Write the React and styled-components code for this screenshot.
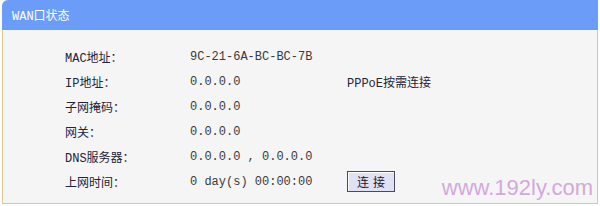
import React from 'react';
import styled, { createGlobalStyle } from 'styled-components';

const GlobalStyle = createGlobalStyle`
  html, body {
    margin: 0;
    padding: 0;
    background: #ffffff;
  }
`;

const Panel = styled.div`
  position: relative;
  width: 596px;
  margin: 0 2px;
  font-family: "Liberation Mono", "Noto Sans CJK SC", monospace;
  font-size: 12px;
`;

const Header = styled.div`
  height: 30px;
  display: flex;
  align-items: center;
  padding-left: 10px;
  background: #6b9cf8;
  border-top-left-radius: 6px;
  color: #ffffff;
  font-size: 12px;
`;

const Body = styled.div`
  height: 174px;
  background: #f5f5f5;
  border: 1px solid #e2c696;
  border-top: none;
  padding: 14px 0 0 62px;
  box-sizing: border-box;
`;

const Grid = styled.div`
  display: grid;
  grid-template-columns: 125px 157px auto;
  grid-auto-rows: 25px;
  align-items: center;
  color: #2b2b3b;
`;

const Cell = styled.div`
  white-space: pre;
  color: ${p => (p.$muted ? '#3a3a3a' : '#23233a')};
`;

const Button = styled.button`
  justify-self: start;
  width: 48px;
  height: 21px;
  padding: 0;
  font-family: "Noto Sans CJK SC", sans-serif;
  font-size: 12px;
  color: #1a1a1a;
  background: #dfe1f5;
  border: 1px solid #4a4a5a;
  box-shadow: inset 1px 1px 0 #ffffff;
  letter-spacing: 4px;
  text-indent: 4px;
`;

const Watermark = styled.div`
  position: absolute;
  right: 5px;
  bottom: 3px;
  font-family: "Liberation Sans", Arial, sans-serif;
  font-size: 22px;
  color: #d2a9da;
  pointer-events: none;
`;

const rows = [
  ['MAC地址：', '9C-21-6A-BC-BC-7B', ''],
  ['IP地址：', '0.0.0.0', 'PPPoE按需连接'],
  ['子网掩码：', '0.0.0.0', ''],
  ['网关：', '0.0.0.0', ''],
  ['DNS服务器：', '0.0.0.0 , 0.0.0.0', ''],
];

const App = () => {
  return (
    <>
      <GlobalStyle />
      <Panel>
        <Header>WAN口状态</Header>
        <Body>
          <Grid>
            {rows.map(([label, value, extra]) => (
              <React.Fragment key={label}>
                <Cell>{label}</Cell>
                <Cell $muted>{value}</Cell>
                <Cell>{extra}</Cell>
              </React.Fragment>
            ))}
            <Cell>上网时间：</Cell>
            <Cell $muted>0 day(s) 00:00:00</Cell>
            <Button>连接</Button>
          </Grid>
        </Body>
        <Watermark>www.192ly.com</Watermark>
      </Panel>
    </>
  );
};

export default App;
